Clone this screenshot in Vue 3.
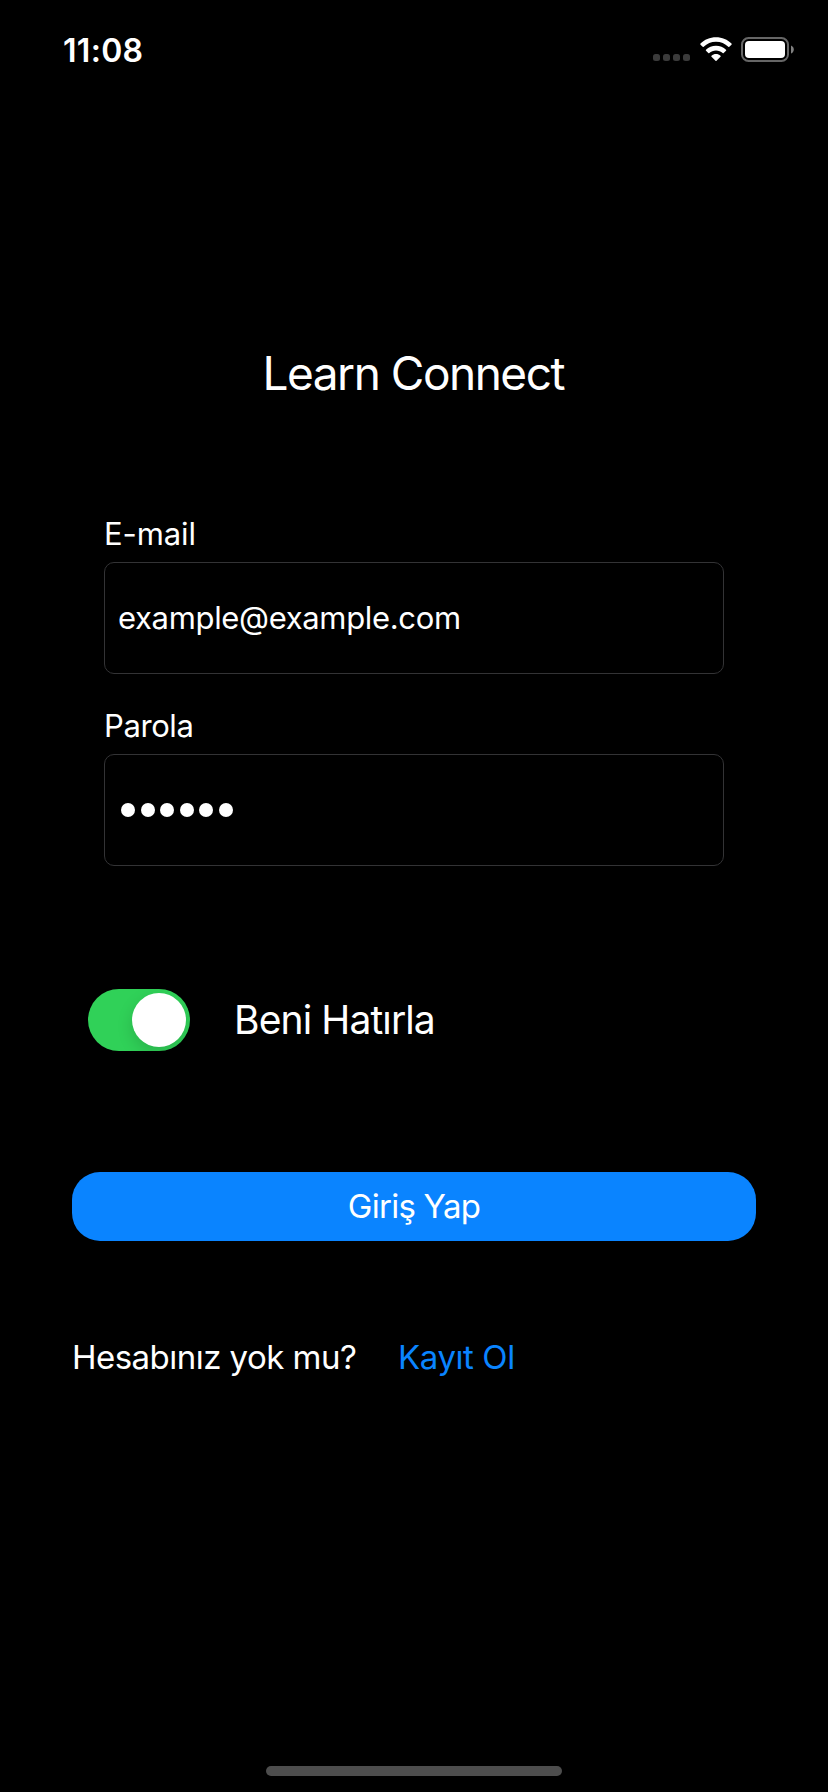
<script setup>
import { ref } from 'vue'

const email = ref('example@example.com')
const passwordLength = ref(6)
const remember = ref(true)
</script>

<template>
  <div class="screen">
    <header class="status-bar">
      <span class="time">11:08</span>
      <div class="indicators">
        <div class="signal"><i v-for="n in 4" :key="n"></i></div>
        <svg class="wifi" width="32" height="25" viewBox="0 0 32 25" fill="#fff">
          <path d="M16 0.2C22.1 0.2 27.6 2.6 31.5 6.6Q32 7.1 31.5 7.7L29.3 9.8Q28.8 10.3 28.3 9.8C25.1 6.7 20.8 4.8 16 4.8S6.9 6.7 3.7 9.8Q3.2 10.3 2.7 9.8L0.5 7.7Q0 7.1 0.5 6.6C4.4 2.6 9.9 0.2 16 0.2Z" />
          <path d="M16 8.8C19.9 8.8 23.4 10.3 26 12.8Q26.5 13.3 26 13.8L23.7 16Q23.2 16.5 22.7 16C20.9 14.3 18.6 13.4 16 13.4S11.1 14.3 9.3 16Q8.8 16.5 8.3 16L6 13.8Q5.5 13.3 6 12.8C8.6 10.3 12.1 8.8 16 8.8Z" />
          <path d="M16 17C17.7 17 19.3 17.6 20.5 18.7Q21 19.2 20.5 19.7L16.5 23.7Q16 24.2 15.5 23.7L11.5 19.7Q11 19.2 11.5 18.7C12.7 17.6 14.3 17 16 17Z" />
        </svg>
        <svg class="battery" width="53" height="25" viewBox="0 0 53 25">
          <rect x="1" y="1" width="46" height="23" rx="6.6" fill="none" stroke="#666" stroke-width="2" />
          <rect x="4" y="4" width="40" height="17" rx="4" fill="#fff" />
          <path d="M50 8.4C51.7 9.1 52.8 10.6 52.8 12.5S51.7 15.9 50 16.6Z" fill="#808080" />
        </svg>
      </div>
    </header>

    <h1 class="title">Learn Connect</h1>

    <form class="form" @submit.prevent>
      <div class="group">
        <label class="label label-email">E-mail</label>
        <div class="field"><span class="value">{{ email }}</span></div>
      </div>
      <div class="group">
        <label class="label">Parola</label>
        <div class="field">
          <div class="mask"><i v-for="n in passwordLength" :key="n"></i></div>
        </div>
      </div>
    </form>

    <div class="remember">
      <div class="switch" :class="{ on: remember }" @click="remember = !remember">
        <span class="knob"></span>
      </div>
      <span class="remember-text">Beni Hatırla</span>
    </div>

    <button class="login" type="button">Giriş Yap</button>

    <footer class="signup">
      <span class="question">Hesabınız yok mu?</span>
      <a class="link">Kayıt Ol</a>
    </footer>

    <div class="home-indicator"></div>
  </div>
</template>

<style>
body { background: #000; }
</style>

<style scoped>
.screen {
  box-sizing: border-box;
  width: 828px;
  height: 1792px;
  padding-bottom: 16px;
  display: flex;
  flex-direction: column;
  background: #000;
  color: #fff;
  font-family: Inter, "Liberation Sans", sans-serif;
  overflow: hidden;
}
.status-bar {
  display: flex;
  justify-content: space-between;
  height: 88px;
  padding: 0 34px 0 63px;
}
.time {
  margin-top: 31px;
  font-size: 32px;
  line-height: 39px;
  font-weight: 600;
  letter-spacing: 0.3px;
}
.indicators {
  display: flex;
  align-items: flex-start;
  padding-top: 37px;
}
.signal {
  display: flex;
  gap: 3px;
  margin: 17px 10px 0 0;
}
.signal i {
  width: 7px;
  height: 7px;
  border-radius: 2.5px;
  background: #3b3b3b;
}
.battery { margin-left: 9px; }
.title {
  margin: 256px 0 0;
  font-size: 46px;
  line-height: 58px;
  font-weight: 400;
  letter-spacing: -1.5px;
  text-align: center;
  text-indent: -1.5px;
}
.form {
  display: flex;
  flex-direction: column;
  gap: 33px;
  margin: 113px 104px 0;
}
.group {
  display: flex;
  flex-direction: column;
  gap: 9px;
}
.label {
  font-size: 31px;
  line-height: 38px;
  letter-spacing: -0.4px;
}
.label-email { letter-spacing: -0.1px; }
.field {
  box-sizing: border-box;
  display: flex;
  align-items: center;
  height: 112px;
  padding: 0 13px;
  border: 1px solid #333335;
  border-radius: 10px;
}
.value {
  font-size: 31px;
  line-height: 38px;
  letter-spacing: -0.34px;
}
.mask {
  display: flex;
  gap: 5.5px;
  margin-left: 3px;
}
.mask i {
  width: 14px;
  height: 14px;
  border-radius: 50%;
  background: #fff;
}
.remember {
  display: flex;
  align-items: center;
  margin: 123px 0 0 88px;
}
.switch {
  box-sizing: border-box;
  display: flex;
  width: 102px;
  height: 62px;
  padding: 4px;
  border-radius: 31px;
  background: #39393d;
  overflow: hidden;
}
.switch.on {
  justify-content: flex-end;
  background: #30d158;
}
.knob {
  width: 54px;
  height: 54px;
  border-radius: 50%;
  background: #fff;
  box-shadow: 0 6px 16px rgba(0, 0, 0, 0.15);
}
.remember-text {
  margin-left: 44px;
  font-size: 39px;
  line-height: 48px;
  letter-spacing: -0.88px;
}
.login {
  height: 69px;
  margin: 121px 72px 0;
  padding: 0 0 2px;
  border: 0;
  border-radius: 28px;
  background: #0a84ff;
  color: #fff;
  font-family: inherit;
  font-size: 33px;
  line-height: 40px;
  letter-spacing: -0.75px;
}
.signup {
  display: flex;
  margin: 96px 0 0 72px;
  font-size: 33px;
  line-height: 40px;
}
.question { width: 326px; letter-spacing: -0.53px; }
.link { color: #0a84ff; letter-spacing: -0.42px; }
.home-indicator {
  align-self: center;
  width: 296px;
  height: 10px;
  margin-top: auto;
  border-radius: 5px;
  background: #4d4d4d;
}
</style>
